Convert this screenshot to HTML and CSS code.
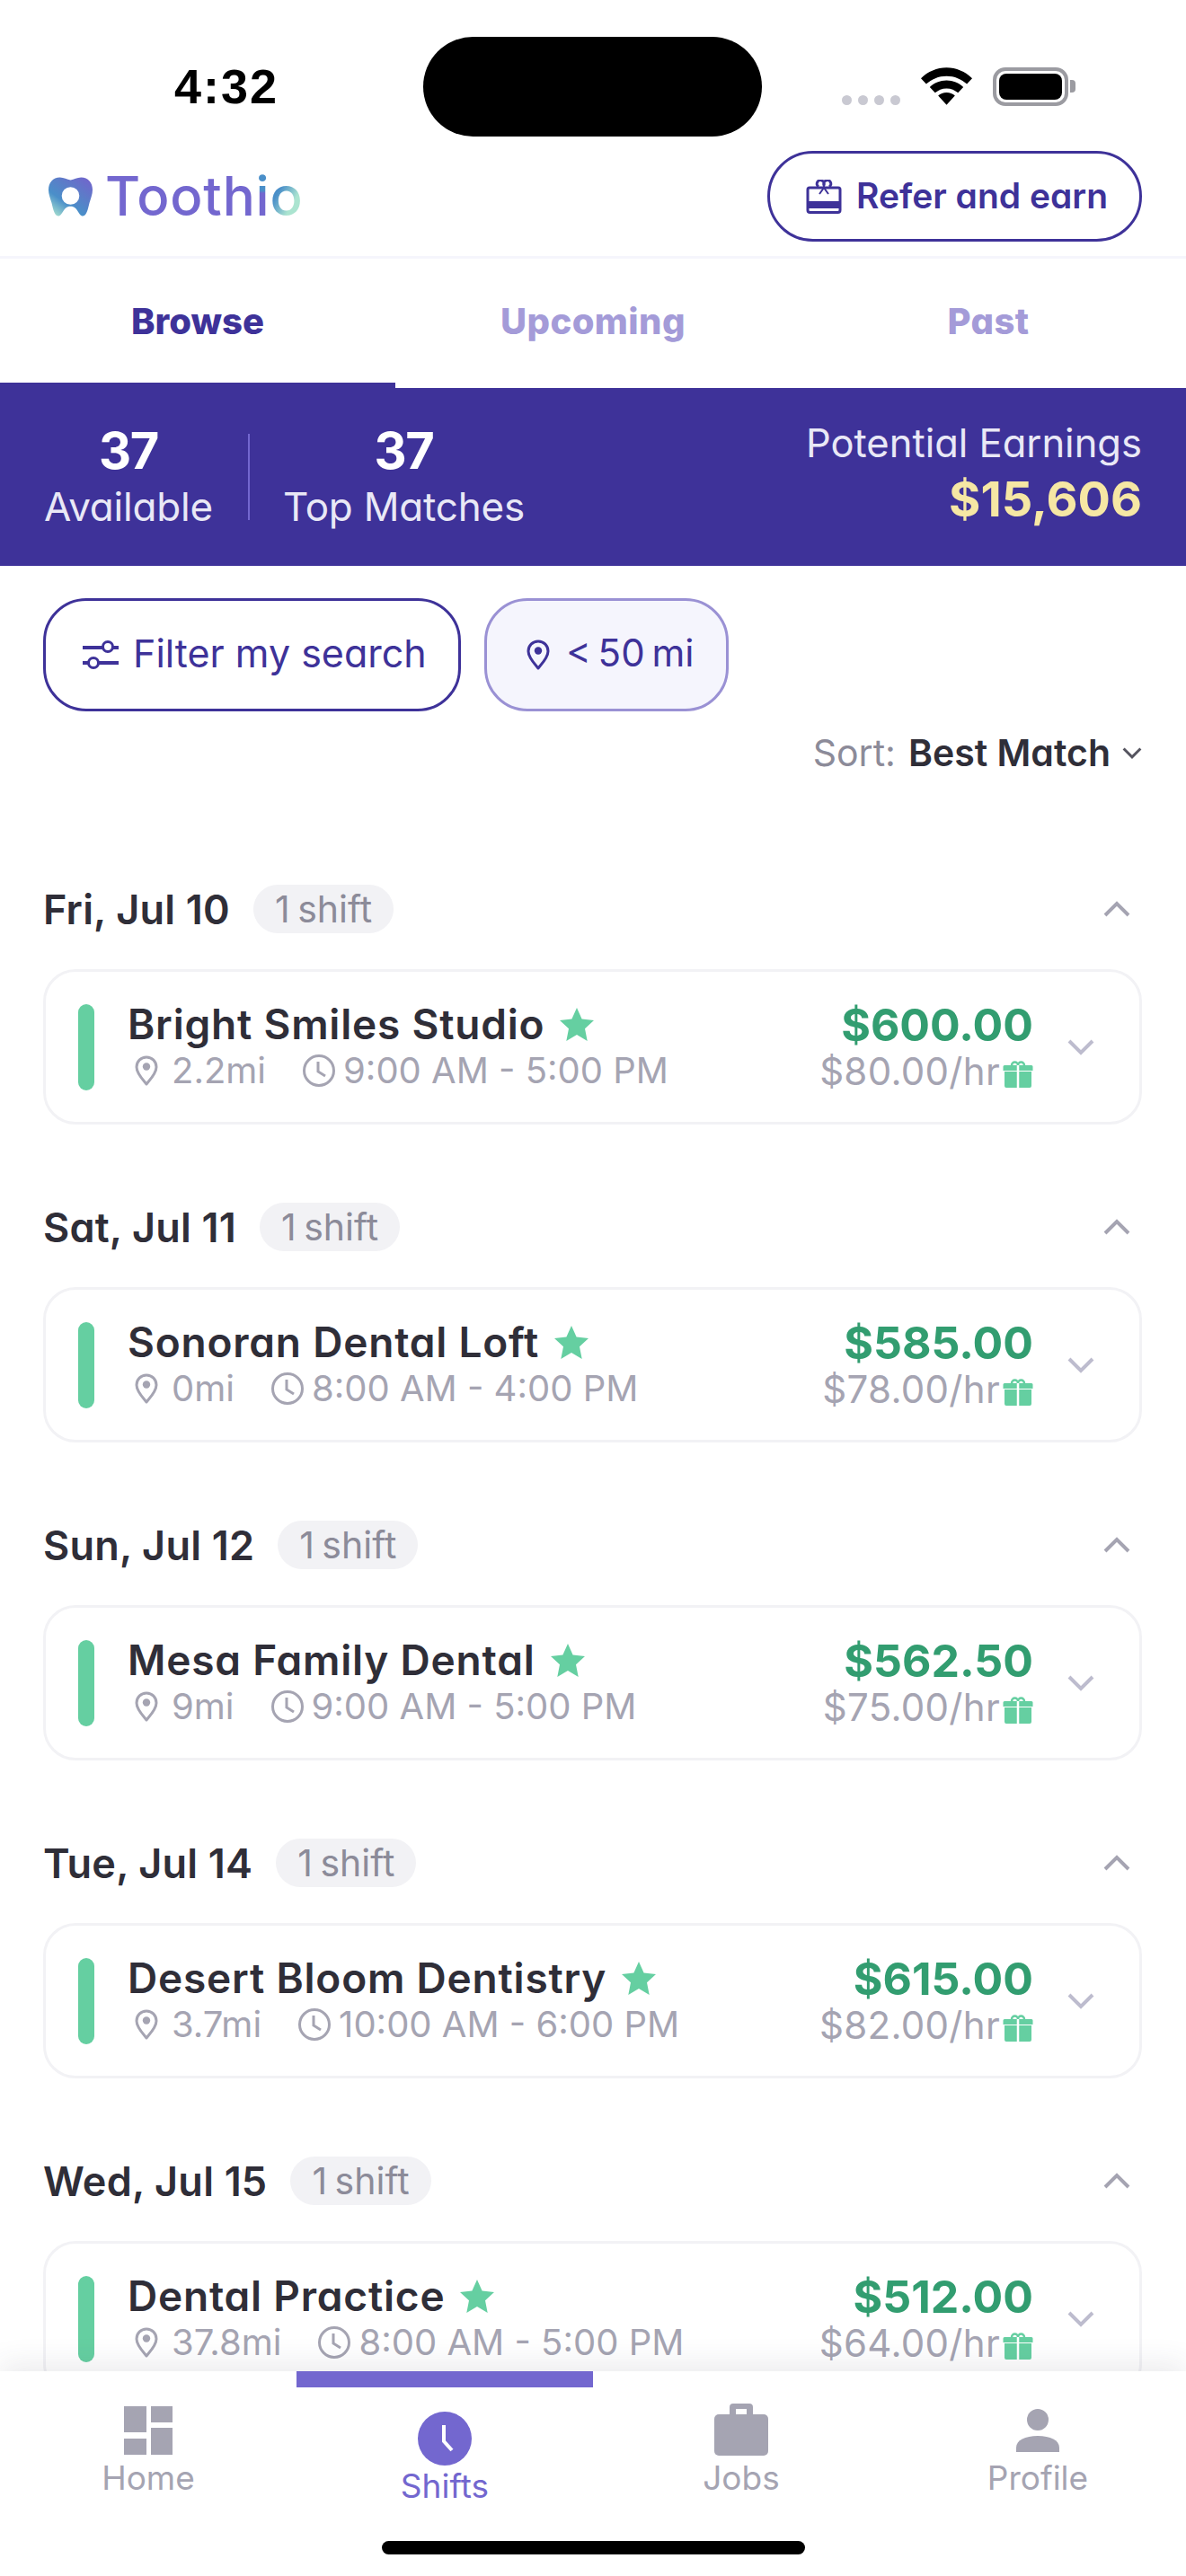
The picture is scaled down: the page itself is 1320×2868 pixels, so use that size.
FILE: index.html
```html
<!DOCTYPE html>
<html lang="en">
<head>
<meta charset="utf-8">
<title>Toothio Shifts</title>
<link rel="stylesheet" href="styles.css">
</head>
<body>
<svg class="defs" width="0" height="0" aria-hidden="true">
  <defs>
    <symbol id="pin" viewBox="0 0 26 34"><path d="M13 2C6.800 2 2 6.800 2 13c0 7 6.500 13.500 11 19 4.500-5.500 11-12 11-19C24 6.800 19.200 2 13 2z" fill="none" stroke="currentColor" stroke-width="3" stroke-linejoin="round"/><circle cx="13" cy="12.500" r="4.200" fill="currentColor"/></symbol>
    <symbol id="clock" viewBox="0 0 38 38"><circle cx="19" cy="19" r="16.500" fill="none" stroke="currentColor" stroke-width="3"/><path d="M18 9v11l8 5" fill="none" stroke="currentColor" stroke-width="3"/></symbol>
    <symbol id="star" viewBox="0 0 40 38"><path d="M20 1l5.600 12.600L39 15l-10 9.300L31.700 38 20 31l-11.700 7L11 24.300 1 15l13.400-1.400z" fill="currentColor"/></symbol>
    <symbol id="gift" viewBox="0 0 34 32"><path d="M10 7a3.500 3.500 0 1 1 7 0 3.500 3.500 0 1 1 7 0" fill="none" stroke="currentColor" stroke-width="2.500"/><path d="M2 7h30a1.500 1.500 0 0 1 1.500 1.500V13H.5V8.500A1.500 1.500 0 0 1 2 7zM2 14h30v16a2 2 0 0 1-2 2H4a2 2 0 0 1-2-2z" fill="currentColor"/><path d="M17 7v25" stroke="#fff" stroke-width="2.500"/></symbol>
    <symbol id="down" viewBox="0 0 30 18"><path d="M2 2l13 13L28 2" fill="none" stroke="currentColor" stroke-width="4"/></symbol>
  </defs>
</svg>
<div class="app">
  <div class="status">
    <div class="time">4:32</div>
    <div class="island"></div>
    <div class="sys">
      <div class="dots"><i></i><i></i><i></i><i></i></div>
      <svg class="wifi" viewBox="0 0 58 42"><path d="M29 0C18 0 8 4.500 0 12l6 6.500C12 13 20 9.500 29 9.500S46 13 52 18.500l6-6.500C50 4.500 40 0 29 0z"/><path d="M29 14.500c-7.500 0-14 3-19 7.500l6 6.500c3.500-3 8-5 13-5s9.500 2 13 5l6-6.500c-5-4.500-11.500-7.500-19-7.500z"/><path d="M29 28c-3.800 0-7 1.400-9.500 3.700L29 42l9.500-10.300C36 29.400 32.800 28 29 28z"/></svg>
      <div class="battery"><div class="cell"></div></div><div class="nub"></div>
    </div>
  </div>
  <header class="top">
    <div class="logo">
      <svg class="tooth" viewBox="0 0 50 44"><defs><linearGradient id="tg" x1="0.900" y1="0" x2="0.100" y2="1"><stop offset="0" stop-color="#7264cc"/><stop offset="0.350" stop-color="#5c7cc8"/><stop offset="0.650" stop-color="#4a8fc9"/><stop offset="1" stop-color="#abe4d0"/></linearGradient></defs><path fill-rule="evenodd" fill="url(#tg)" d="M13 0c4.500 0 8 2.500 12 3 4-.5 7.500-3 12-3 8 0 13 6 13 14 0 5-2 10-3.500 15-1.500 6-3 15-7.500 15-5.500 0-5-11-14-11s-8.500 11-14 11c-4.500 0-6-9-7.500-15C2 24 0 19 0 14 0 6 5 0 13 0zM25 11a10 10 0 1 0 0 20 10 10 0 1 0 0-20z"/></svg>
      <span class="wordmark">Tooth<span class="i">i</span><span class="io">o</span></span>
    </div>
    <button class="refer">
      <svg class="refer-ic" viewBox="0 0 40 38"><path d="M14 8a4 4 0 1 1 6-2 4 4 0 1 1 6 2" fill="none" stroke="currentColor" stroke-width="3"/><path d="M4 9h32a2 2 0 0 1 2 2v23a2.500 2.500 0 0 1-2.500 2.500h-31A2.500 2.500 0 0 1 2 34V11a2 2 0 0 1 2-2z" fill="none" stroke="currentColor" stroke-width="3"/><path d="M2 25h36v6H2zM20 9l-5 7M20 9l5 7" fill="currentColor" stroke="currentColor" stroke-width="2"/></svg>
      Refer and earn
    </button>
  </header>
  <nav class="tabs">
    <div class="tab active">Browse</div>
    <div class="tab">Upcoming</div>
    <div class="tab">Past</div>
  </nav>
  <section class="banner">
    <div class="stat"><b>37</b><span>Available</span></div>
    <div class="stat-sep"></div>
    <div class="stat"><b>37</b><span>Top Matches</span></div>
    <div class="earn"><span>Potential Earnings</span><b>$15,606</b></div>
  </section>
  <main class="scroll">
    <div class="filters">
      <button class="fbtn">
        <svg class="fic" viewBox="0 0 40 36"><path d="M0 10h23M33 10h7M0 27h7M17 27h23" stroke="currentColor" stroke-width="4" fill="none"/><circle cx="28" cy="9" r="5.500" fill="none" stroke="currentColor" stroke-width="3"/><circle cx="12" cy="27" r="5.500" fill="none" stroke="currentColor" stroke-width="3"/></svg>
        Filter my search
      </button>
      <button class="fbtn chip"><svg class="fpin"><use href="#pin"/></svg>&lt; 50 mi</button>
    </div>
    <div class="sort">Sort:<b>Best Match</b><svg class="sort-ic"><use href="#down"/></svg></div>

    <div class="day">
      <div class="day-head"><h2>Fri, Jul 10</h2><span class="pill">1 shift</span><svg class="up"><use href="#down"/></svg></div>
      <article class="card">
        <div class="bar"></div>
        <div class="info">
          <div class="name">Bright Smiles Studio<svg class="star"><use href="#star"/></svg></div>
          <div class="meta"><svg class="pin"><use href="#pin"/></svg><span class="mi">2.2mi</span><svg class="clock"><use href="#clock"/></svg><span>9:00 AM - 5:00 PM</span></div>
        </div>
        <div class="pay"><div class="total">$600.00</div><div class="rate">$80.00/hr<svg class="gift"><use href="#gift"/></svg></div></div>
        <svg class="more"><use href="#down"/></svg>
      </article>
    </div>

    <div class="day">
      <div class="day-head"><h2>Sat, Jul 11</h2><span class="pill">1 shift</span><svg class="up"><use href="#down"/></svg></div>
      <article class="card">
        <div class="bar"></div>
        <div class="info">
          <div class="name">Sonoran Dental Loft<svg class="star"><use href="#star"/></svg></div>
          <div class="meta"><svg class="pin"><use href="#pin"/></svg><span class="mi">0mi</span><svg class="clock"><use href="#clock"/></svg><span>8:00 AM - 4:00 PM</span></div>
        </div>
        <div class="pay"><div class="total">$585.00</div><div class="rate">$78.00/hr<svg class="gift"><use href="#gift"/></svg></div></div>
        <svg class="more"><use href="#down"/></svg>
      </article>
    </div>

    <div class="day">
      <div class="day-head"><h2>Sun, Jul 12</h2><span class="pill">1 shift</span><svg class="up"><use href="#down"/></svg></div>
      <article class="card">
        <div class="bar"></div>
        <div class="info">
          <div class="name">Mesa Family Dental<svg class="star"><use href="#star"/></svg></div>
          <div class="meta"><svg class="pin"><use href="#pin"/></svg><span class="mi">9mi</span><svg class="clock"><use href="#clock"/></svg><span>9:00 AM - 5:00 PM</span></div>
        </div>
        <div class="pay"><div class="total">$562.50</div><div class="rate">$75.00/hr<svg class="gift"><use href="#gift"/></svg></div></div>
        <svg class="more"><use href="#down"/></svg>
      </article>
    </div>

    <div class="day">
      <div class="day-head"><h2>Tue, Jul 14</h2><span class="pill">1 shift</span><svg class="up"><use href="#down"/></svg></div>
      <article class="card">
        <div class="bar"></div>
        <div class="info">
          <div class="name">Desert Bloom Dentistry<svg class="star"><use href="#star"/></svg></div>
          <div class="meta"><svg class="pin"><use href="#pin"/></svg><span class="mi">3.7mi</span><svg class="clock"><use href="#clock"/></svg><span>10:00 AM - 6:00 PM</span></div>
        </div>
        <div class="pay"><div class="total">$615.00</div><div class="rate">$82.00/hr<svg class="gift"><use href="#gift"/></svg></div></div>
        <svg class="more"><use href="#down"/></svg>
      </article>
    </div>

    <div class="day">
      <div class="day-head"><h2>Wed, Jul 15</h2><span class="pill">1 shift</span><svg class="up"><use href="#down"/></svg></div>
      <article class="card">
        <div class="bar"></div>
        <div class="info">
          <div class="name">Dental Practice<svg class="star"><use href="#star"/></svg></div>
          <div class="meta"><svg class="pin"><use href="#pin"/></svg><span class="mi">37.8mi</span><svg class="clock"><use href="#clock"/></svg><span>8:00 AM - 5:00 PM</span></div>
        </div>
        <div class="pay"><div class="total">$512.00</div><div class="rate">$64.00/hr<svg class="gift"><use href="#gift"/></svg></div></div>
        <svg class="more"><use href="#down"/></svg>
      </article>
    </div>
  </main>
  <footer class="tabbar">
    <div class="item">
      <svg class="nav-ic" viewBox="0 0 60 56"><path d="M3 0h25v29H3zM3 36h25v18H3zM33 0h24v18H33zM33 24h24v30H33z" fill="#a5a4b2"/></svg>
      <span>Home</span>
    </div>
    <div class="item on">
      <i class="indicator"></i>
      <svg class="nav-ic big" viewBox="0 0 60 60"><circle cx="30" cy="30" r="30" fill="#7367cf"/><path d="M29 15v18l9 10" fill="none" stroke="#fff" stroke-width="4"/></svg>
      <span>Shifts</span>
    </div>
    <div class="item">
      <svg class="nav-ic job" viewBox="0 0 60 58"><path fill-rule="evenodd" d="M17 12V4a4 4 0 0 1 4-4h18a4 4 0 0 1 4 4v8h-7V6H24v6z" fill="#a5a4b2"/><path d="M5 12h50a5 5 0 0 1 5 5v36a5 5 0 0 1-5 5H5a5 5 0 0 1-5-5V17a5 5 0 0 1 5-5z" fill="#a5a4b2"/></svg>
      <span>Jobs</span>
    </div>
    <div class="item">
      <svg class="nav-ic" viewBox="0 0 60 56"><circle cx="30" cy="15" r="12" fill="#a5a4b2"/><path d="M6 51v-5c0-8 10-13 24-13s24 5 24 13v5z" fill="#a5a4b2"/></svg>
      <span>Profile</span>
    </div>
    <div class="home-bar"></div>
  </footer>
</div>
</body>
</html>
```

FILE: styles.css
```css
* { box-sizing: border-box; }
html, body { margin: 0; padding: 0; background: #fff; }
body { font-family: Inter, "Noto Sans", sans-serif; font-feature-settings: "cv11" 1; color: #2f2e38; }
.defs { position: absolute; }
button { font: inherit; font-feature-settings: inherit; background: none; cursor: pointer; }
.app { width: 1320px; height: 2868px; display: flex; flex-direction: column; overflow: hidden; background: #fff; }

/* status bar */
.status { height: 160px; flex: none; display: flex; align-items: flex-start; padding-top: 41px; }
.time { width: 471px; padding-left: 194px; font: 700 54px/111px "Liberation Sans", sans-serif; letter-spacing: 2px; color: #000; }
.island { width: 377px; height: 111px; border-radius: 56px; background: #000; }
.sys { flex: 1; display: flex; align-items: flex-start; height: 43px; margin-top: 34px; padding-left: 89px; }
.dots { display: flex; gap: 7px; margin-top: 31px; margin-right: 23px; }
.dots i { width: 11px; height: 11px; border-radius: 50%; background: #c9c9d2; }
.wifi { width: 57px; height: 42px; fill: #000; margin-right: 23px; }
.battery { width: 84px; height: 43px; border: 4px solid #9b9ba1; border-radius: 14px; padding: 3px; background: #fff; }
.cell { width: 100%; height: 100%; background: #000; border-radius: 8px; }
.nub { width: 6px; height: 14px; margin-top: 14px; margin-left: 2px; background: #9b9ba1; border-radius: 0 4px 4px 0; }

/* header */
.top { height: 128px; flex: none; display: flex; align-items: flex-start; justify-content: space-between; padding: 8px 49px 0 54px; border-bottom: 3px solid #f5f5fc; }
.logo { display: flex; align-items: center; gap: 14px; height: 101px; }
.tooth { width: 49px; height: 44px; display: block; }
.wordmark { font-size: 60px; font-weight: 500; color: #7367cf; line-height: 1; letter-spacing: .8px; padding-bottom: 2px; }
.i { background: linear-gradient(180deg, #4a8fc9 42%, #7367cf 46%); -webkit-background-clip: text; background-clip: text; color: transparent; }
.io { background: linear-gradient(120deg, #4a8fc9 35%, #abe4d0 65%); -webkit-background-clip: text; background-clip: text; color: transparent; }
.refer { width: 417px; height: 101px; border: 3px solid #3e3299; border-radius: 51px; color: #3e3299; font-size: 39px; font-weight: 600; display: flex; align-items: center; gap: 16px; padding: 0 0 3px 40px; white-space: nowrap; }
.refer-ic { width: 40px; height: 38px; flex: none; margin-top: 3px; }

/* tabs */
.tabs { height: 144px; flex: none; display: grid; grid-template-columns: repeat(3, 1fr); }
.tab { display: flex; align-items: center; justify-content: center; font-size: 40px; font-weight: 800; letter-spacing: .4px; color: #a49bd8; padding-bottom: 5px; }
.tab.active { color: #3e3299; border-bottom: 6px solid #3e3299; padding-bottom: 0; letter-spacing: 0; }

/* banner */
.banner { height: 198px; flex: none; background: #3e3299; color: #fff; display: flex; align-items: flex-start; padding: 36px 49px 0; }
.stat { display: flex; flex-direction: column; align-items: center; }
.stat b { font-size: 56px; font-weight: 700; line-height: 68px; letter-spacing: -1.5px; }
.stat span { font-size: 44px; line-height: 52px; color: #e9e8f6; margin-top: 2px; letter-spacing: -.2px; }
.earn span { font-size: 43.500px; line-height: 52px; color: #e9e8f6; }
.stat-sep { width: 2px; height: 96px; margin: 15px 37px 0 39px; background: #7367cf; }
.earn { margin-left: auto; display: flex; flex-direction: column; align-items: flex-end; margin-top: -1px; }
.earn b { font-size: 54px; line-height: 60px; font-weight: 700; color: #f6e7a4; margin-top: 7px; }

/* list */
.scroll { flex: 1; min-height: 0; overflow: hidden; padding: 36px 49px 0 48px; }
.filters { display: flex; gap: 26px; }
.fbtn { height: 126px; width: 465px; border: 3px solid #3e3299; border-radius: 48px; color: #3e3299; font-size: 43px; display: flex; align-items: center; gap: 16px; padding: 0 0 5px 41px; white-space: nowrap; }
.fic { width: 40px; height: 36px; flex: none; margin-top: 5px; }
.chip { width: 272px; background: #f5f5fd; border-color: #9a91d4; padding-left: 44px; gap: 18px; font-size: 42px; word-spacing: -4px; }
.fpin { width: 26px; height: 34px; flex: none; margin-top: 5px; }
.sort { display: flex; align-items: center; justify-content: flex-end; font-size: 41px; color: #8c8b99; height: 46px; margin-top: 23px; }
.sort b { color: #2f2e38; font-weight: 600; margin-left: 14px; }
.sort-ic { width: 22px; height: 13px; margin-left: 13px; color: #55545f; }

.day-head { height: 54px; margin-top: 124px; display: flex; align-items: center; }
.day + .day .day-head { margin-top: 87px; }
.day-head h2 { margin: 0; font-size: 45px; font-weight: 600; letter-spacing: .2px; color: #2f2e38; }
.pill { height: 54px; border-radius: 27px; background: #f2f2f5; color: #8c8b99; font-size: 41px; word-spacing: -3px; display: flex; align-items: center; padding: 0 24px; margin-left: 26px; }
.up { width: 30px; height: 18px; margin-left: auto; margin-right: 13px; color: #a5a4b2; transform: rotate(180deg); }

.card { height: 173px; margin-top: 40px; border: 3px solid #f2f2f5; border-radius: 36px; display: flex; align-items: center; padding: 0 0 0 36px; background: #fff; }
.bar { width: 18px; height: 96px; border-radius: 9px; background: #65cfa1; flex: none; }
.info { margin-left: 37px; display: flex; flex-direction: column; flex: 1; min-width: 0; }
.name { display: flex; align-items: center; font-size: 46px; letter-spacing: .8px; font-weight: 600; color: #2f2e38; line-height: 48px; }
.star { width: 40px; height: 38px; color: #65cfa1; margin-left: 16px; }
.meta { display: flex; align-items: center; font-size: 40px; color: #a5a4b2; line-height: 46px; margin-top: 5px; padding-left: 8px; }
.pin { width: 26px; height: 34px; flex: none; }
.mi { margin-left: 15px; margin-right: 40px; }
.clock { width: 38px; height: 38px; flex: none; margin-right: 8px; }
.pay { display: flex; flex-direction: column; align-items: flex-end; flex: none; }
.total { font-size: 50px; font-weight: 700; line-height: 50px; color: #329d70; }
.rate { display: flex; align-items: center; font-size: 42px; letter-spacing: .3px; color: #a5a4b2; line-height: 46px; margin-top: 4px; }
.gift { width: 34px; height: 32px; margin-left: 3px; margin-top: 4px; color: #65cfa1; }
.more { width: 30px; height: 18px; color: #bdbcce; margin: 0 50px 0 38px; flex: none; }

/* tab bar */
.tabbar { position: relative; height: 228px; flex: none; background: #fff; display: grid; grid-template-columns: repeat(4, 1fr); box-shadow: 0 -8px 30px rgba(60, 60, 80, 0.10); }
.item { position: relative; display: flex; flex-direction: column; align-items: center; padding-top: 39px; color: #a5a4b2; font-size: 37px; }
.item span { line-height: 44px; margin-top: 2px; }
.nav-ic { width: 60px; height: 56px; display: block; }
.nav-ic.big { height: 60px; margin-top: 6px; }
.nav-ic.job { height: 58px; margin-top: -3px; margin-bottom: 1px; }
.item.on { color: #7367cf; }
.item.on span { margin-top: 1px; }
.indicator { position: absolute; top: 0; left: 0; right: 0; height: 18px; background: #7367cf; }
.home-bar { position: absolute; left: 425px; bottom: 24px; width: 471px; height: 15px; border-radius: 8px; background: #000; }
```
